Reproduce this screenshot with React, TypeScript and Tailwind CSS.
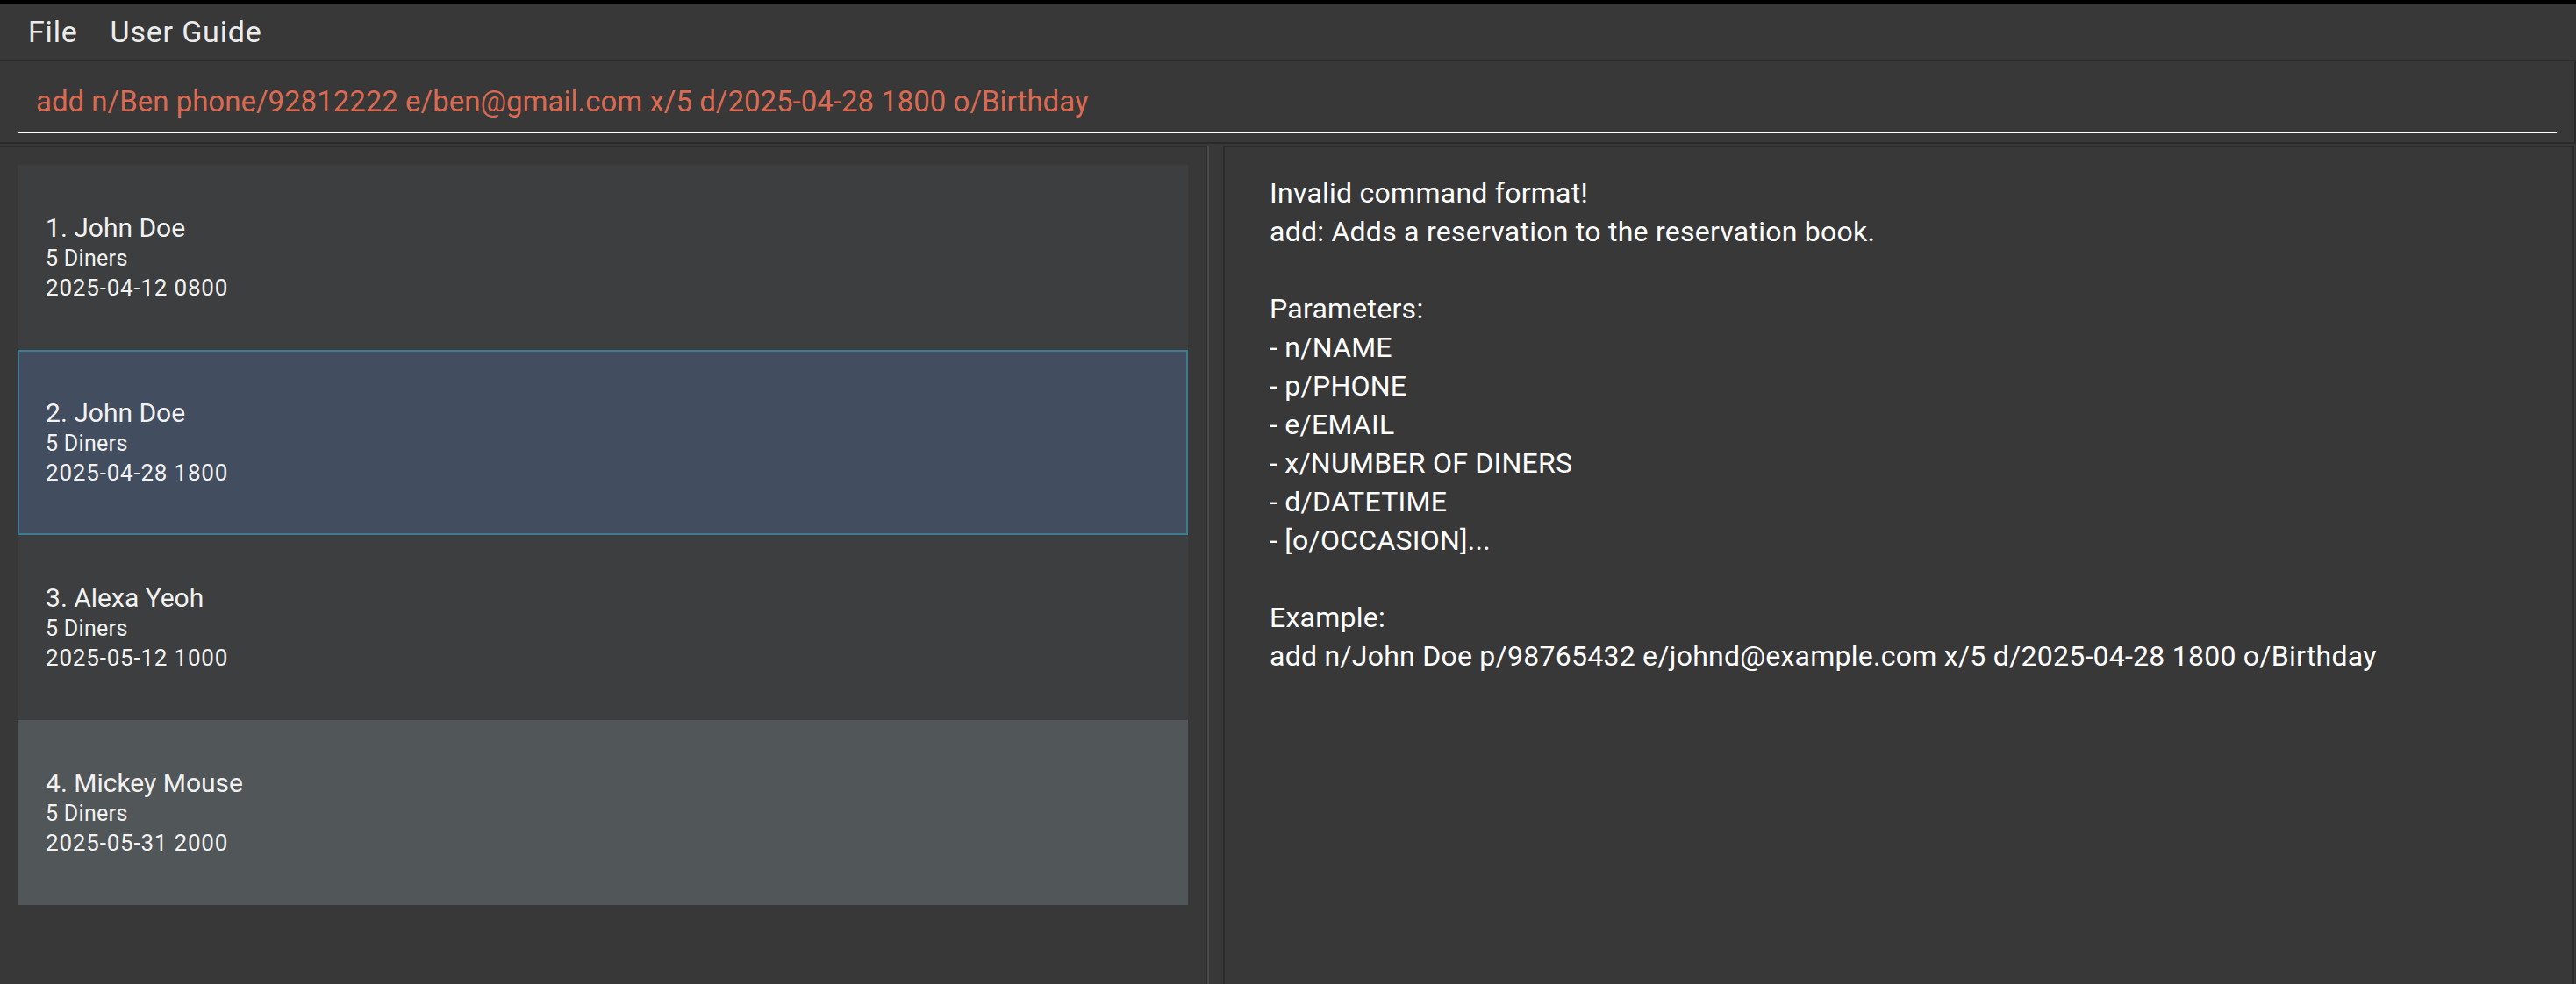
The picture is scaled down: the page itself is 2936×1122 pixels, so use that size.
import React from "react";

interface Reservation {
    name: string;
    diners: number;
    datetime: string;
}

const RESERVATIONS: Reservation[] = [
    { name: "John Doe", diners: 5, datetime: "2025-04-12 0800" },
    { name: "John Doe", diners: 5, datetime: "2025-04-28 1800" },
    { name: "Alexa Yeoh", diners: 5, datetime: "2025-05-12 1000" },
    { name: "Mickey Mouse", diners: 5, datetime: "2025-05-31 2000" },
];

const SELECTED = 1;

const RESULT_LINES = [
    "Invalid command format!",
    "add: Adds a reservation to the reservation book.",
    "",
    "Parameters:",
    "- n/NAME",
    "- p/PHONE",
    "- e/EMAIL",
    "- x/NUMBER OF DINERS",
    "- d/DATETIME",
    "- [o/OCCASION]...",
    "",
    "Example:",
    "add n/John Doe p/98765432 e/johnd@example.com x/5 d/2025-04-28 1800 o/Birthday",
];

const ReservationCard: React.FC<{ r: Reservation; index: number }> = ({ r, index }) => {
    const selected = index === SELECTED;
    // alternating rows like the list view, selected row gets the blue-grey fill
    const bg = selected
        ? "bg-[#424d5f] border-2 border-[#3e7b91] pl-[30px]"
        : index % 2 === 0
        ? "bg-[#3c3e3f] pl-[32px]"
        : "bg-[#515658] pl-[32px]";

    return (
        <div className={`h-[211px] flex flex-col justify-center text-[#f2f2f2] ${bg}`}>
            <div className="text-[30px] leading-[36px]">
                {index + 1}. {r.name}
            </div>
            <div className="text-[25px] leading-[33px] tracking-[0.3px]">{r.diners} Diners</div>
            <div className="text-[26px] leading-[34px] tracking-[0.8px]">{r.datetime}</div>
        </div>
    );
};

export default function App() {
    return (
        <div
            className="w-[2936px] h-[1122px] bg-[#383838] flex flex-col overflow-hidden"
            style={{ fontFamily: "Roboto, 'Noto Sans', sans-serif" }}
        >
            <div className="h-[4px] bg-black shrink-0" />

            {/* menu bar */}
            <div className="h-[64px] shrink-0 flex pl-[32px] gap-[37px] text-[34px] leading-[64px] tracking-[0.8px] text-[#ececec]">
                <span>File</span>
                <span>User Guide</span>
            </div>

            {/* command box */}
            <div className="h-[96px] shrink-0 border-y-2 border-r-2 border-[#2a2a2a]">
                <div className="mx-[20px] h-[82px] pt-[12px] border-b-2 border-white">
                    <div className="pl-[21px] text-[33px] leading-[68px] text-[#db6a52] whitespace-nowrap">
                        add n/Ben phone/92812222 e/ben@gmail.com x/5 d/2025-04-28 1800 o/Birthday
                    </div>
                </div>
            </div>

            <div className="flex flex-1 mt-[2px] min-h-0">
                {/* reservation list */}
                <div className="w-[1376px] shrink-0 border-t-2 border-r-2 border-[#2b2b2b] p-[20px] flex flex-col">
                    {RESERVATIONS.map((r, i) => (
                        <ReservationCard key={i} r={r} index={i} />
                    ))}
                </div>

                {/* splitter */}
                <div className="w-[18px] shrink-0 border-l-2 border-[#4a4a4a]" />

                {/* result display */}
                <div className="flex-1 mr-[2px] border-t-2 border-x-2 border-[#2b2b2b] pl-[51px] pt-[30px] text-[32px] leading-[44px] tracking-[0.25px] text-white">
                    {RESULT_LINES.map((line, i) => (
                        <div key={i} className="h-[44px] whitespace-nowrap">
                            {line}
                        </div>
                    ))}
                </div>
            </div>
        </div>
    );
}
